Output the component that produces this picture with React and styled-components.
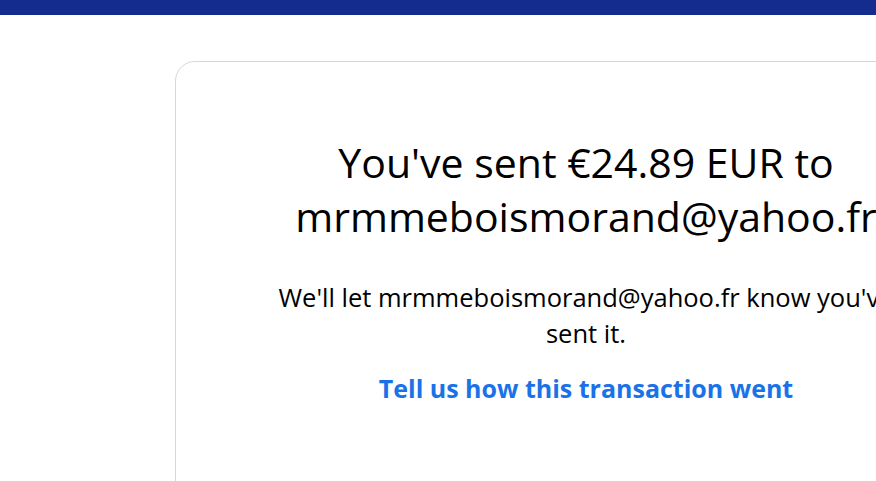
import React from "react"
import styled, { createGlobalStyle } from 'styled-components';

const Global = createGlobalStyle`
    html, body {
        margin: 0;
        padding: 0;
        background: #fff;
        overflow: hidden;
    }
    body {
        font-family: "Open Sans", "Noto Sans", sans-serif;
        color: #001435;
    }
`

const TopBar = styled.div`
    height: 15px;
    background: #142c8e;
`

const Page = styled.div`
    padding: 46px 0 0 175px;
    width: 1100px;
`

const Card = styled.div`
    width: 822px;
    height: 600px;
    box-sizing: border-box;
    border: 1px solid #dbd8d0;
    border-radius: 20px;
    padding: 73px 0 0;
    display: flex;
    flex-direction: column;
    align-items: center;
    text-align: center;
`

const Heading = styled.h1`
    width: 640px;
    margin: 0;
    font-size: 41px;
    line-height: 54px;
    font-weight: 400;
    color: #000;
`

const Note = styled.p`
    width: 660px;
    margin: 36px 0 0;
    font-size: 25.5px;
    line-height: 36px;
    color: #000;
`

const FeedbackLink = styled.a`
    margin-top: 19px;
    font-size: 25px;
    line-height: 36px;
    font-weight: 700;
    color: #1a72e8;
    text-decoration: none;
    cursor: pointer;
`

const App = () => (
    <>
        <Global />
        <TopBar />
        <Page>
            <Card>
                <Heading>You've sent €24.89 EUR to mrmmeboismorand@yahoo.fr</Heading>
                <Note>We'll let mrmmeboismorand@yahoo.fr know you've sent it.</Note>
                <FeedbackLink>Tell us how this transaction went</FeedbackLink>
            </Card>
        </Page>
    </>
)

export default App
